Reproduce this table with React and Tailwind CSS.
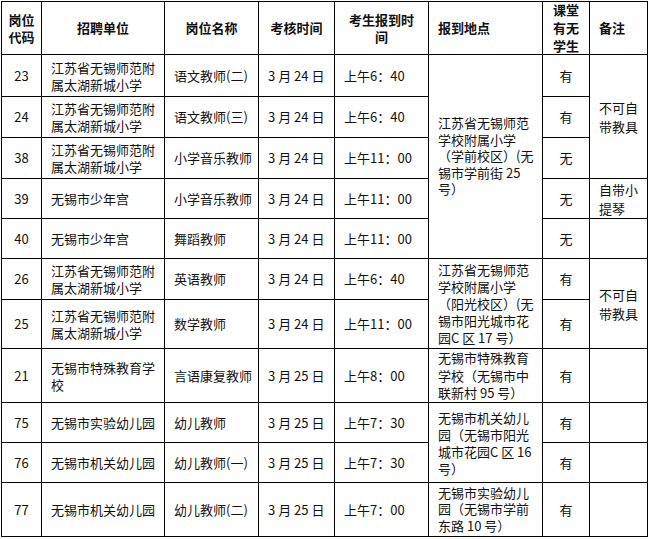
import React from 'react';

const cellBase = 'border border-black p-0 align-middle';
const leftCell = 'border border-black p-0 align-middle text-left pl-[9px] pr-[3px]';
const centerCell = 'border border-black p-0 align-middle text-center';

const rows = [
  {
    id: '23', unit: ['江苏省无锡师范附', '属太湖新城小学'], job: '语文教师(二)', date: '3 月 24 日', time: '上午6：40', has: '有', h: 'h-[42px]',
    addr: { span: 5, lines: ['江苏省无锡师范', '学校附属小学', '（学前校区）(无', '锡市学前街 25', '号）'], lh: 'leading-[16.5px]' },
    note: { span: 3, lines: ['不可自', '带教具'] },
  },
  { id: '24', unit: ['江苏省无锡师范附', '属太湖新城小学'], job: '语文教师(三)', date: '3 月 24 日', time: '上午6：40', has: '有', h: 'h-[41px]' },
  { id: '38', unit: ['江苏省无锡师范附', '属太湖新城小学'], job: '小学音乐教师', date: '3 月 24 日', time: '上午11：00', has: '无', h: 'h-[41px]' },
  {
    id: '39', unit: ['无锡市少年宫'], job: '小学音乐教师', date: '3 月 24 日', time: '上午11：00', has: '无', h: 'h-[40px]',
    note: { span: 1, lines: ['自带小', '提琴'] },
  },
  {
    id: '40', unit: ['无锡市少年宫'], job: '舞蹈教师', date: '3 月 24 日', time: '上午11：00', has: '无', h: 'h-[40px]',
    note: { span: 1, lines: [] },
  },
  {
    id: '26', unit: ['江苏省无锡师范附', '属太湖新城小学'], job: '英语教师', date: '3 月 24 日', time: '上午6：40', has: '有', h: 'h-[41px]',
    addr: { span: 2, lines: ['江苏省无锡师范', '学校附属小学', '（阳光校区）(无', '锡市阳光城市花', '园C 区 17 号）'], lh: 'leading-[17px]' },
    note: { span: 2, lines: ['不可自', '带教具'] },
  },
  { id: '25', unit: ['江苏省无锡师范附', '属太湖新城小学'], job: '数学教师', date: '3 月 24 日', time: '上午11：00', has: '有', h: 'h-[49px]' },
  {
    id: '21', unit: ['无锡市特殊教育学', '校'], job: '言语康复教师', date: '3 月 25 日', time: '上午8：00', has: '有', h: 'h-[54px]',
    addr: { span: 1, lines: ['无锡市特殊教育', '学校（无锡市中', '联新村 95 号）'], lh: 'leading-[17.5px]' },
    note: { span: 1, lines: [] },
  },
  {
    id: '75', unit: ['无锡市实验幼儿园'], job: '幼儿教师', date: '3 月 25 日', time: '上午7：30', has: '有', h: 'h-[40px]',
    addr: { span: 2, lines: ['无锡市机关幼儿', '园（无锡市阳光', '城市花园C 区 16', '号）'], lh: 'leading-[17px]' },
    note: { span: 1, lines: [] },
  },
  {
    id: '76', unit: ['无锡市机关幼儿园'], job: '幼儿教师(一)', date: '3 月 25 日', time: '上午7：30', has: '有', h: 'h-[40px]',
    note: { span: 1, lines: [] },
  },
  {
    id: '77', unit: ['无锡市机关幼儿园'], job: '幼儿教师(二)', date: '3 月 25 日', time: '上午7：00', has: '有', h: 'h-[54px]',
    addr: { span: 1, lines: ['无锡市实验幼儿', '园（无锡市学前', '东路 10 号）'], lh: 'leading-[16.5px]' },
    note: { span: 1, lines: [] },
  },
];

const Lines = ({ lines }) =>
  lines.map((l, i) => (
    <React.Fragment key={i}>
      {i > 0 && <br />}
      {l}
    </React.Fragment>
  ));

export default function App() {
  return (
    <div
      className="w-[649px] h-[539px] bg-white pt-[1px] pl-[1px] text-[13px] text-[#111]"
      style={{ fontFamily: '"Noto Sans CJK SC", "Liberation Sans", sans-serif' }}
    >
      <table className="table-fixed border-collapse w-[646px]">
        <colgroup>
          <col className="w-[40px]" />
          <col className="w-[123px]" />
          <col className="w-[94px]" />
          <col className="w-[76px]" />
          <col className="w-[94px]" />
          <col className="w-[114px]" />
          <col className="w-[47px]" />
          <col className="w-[58px]" />
        </colgroup>
        <thead>
          <tr className="h-[53px] font-bold">
            <th className={`${centerCell} leading-[17px]`}>岗位<br />代码</th>
            <th className={centerCell}>招聘单位</th>
            <th className={centerCell}>岗位名称</th>
            <th className={centerCell}>考核时间</th>
            <th className={`${centerCell} leading-[17px]`}>考生报到时<br />间</th>
            <th className={`${leftCell} font-bold`}>报到地点</th>
            <th className={`${centerCell} leading-[18px]`}>
              <div className="h-[51px] overflow-hidden flex flex-col justify-center">
                <span>课堂</span>
                <span>有无</span>
                <span>学生</span>
              </div>
            </th>
            <th className={`${leftCell} pl-[8px]`}>备注</th>
          </tr>
        </thead>
        <tbody>
          {rows.map((r) => (
            <tr key={r.id} className={r.h}>
              <td className={centerCell}>{r.id}</td>
              <td className={`${leftCell} leading-[17px]`}>
                <Lines lines={r.unit} />
              </td>
              <td className={leftCell}>{r.job}</td>
              <td className={leftCell}>{r.date}</td>
              <td className={leftCell}>{r.time}</td>
              {r.addr && (
                <td rowSpan={r.addr.span} className={`${leftCell} ${r.addr.lh}`}>
                  <Lines lines={r.addr.lines} />
                </td>
              )}
              <td className={centerCell}>{r.has}</td>
              {r.note && (
                <td rowSpan={r.note.span} className={`${leftCell} leading-[19px]`}>
                  <Lines lines={r.note.lines} />
                </td>
              )}
            </tr>
          ))}
        </tbody>
      </table>
    </div>
  );
}
